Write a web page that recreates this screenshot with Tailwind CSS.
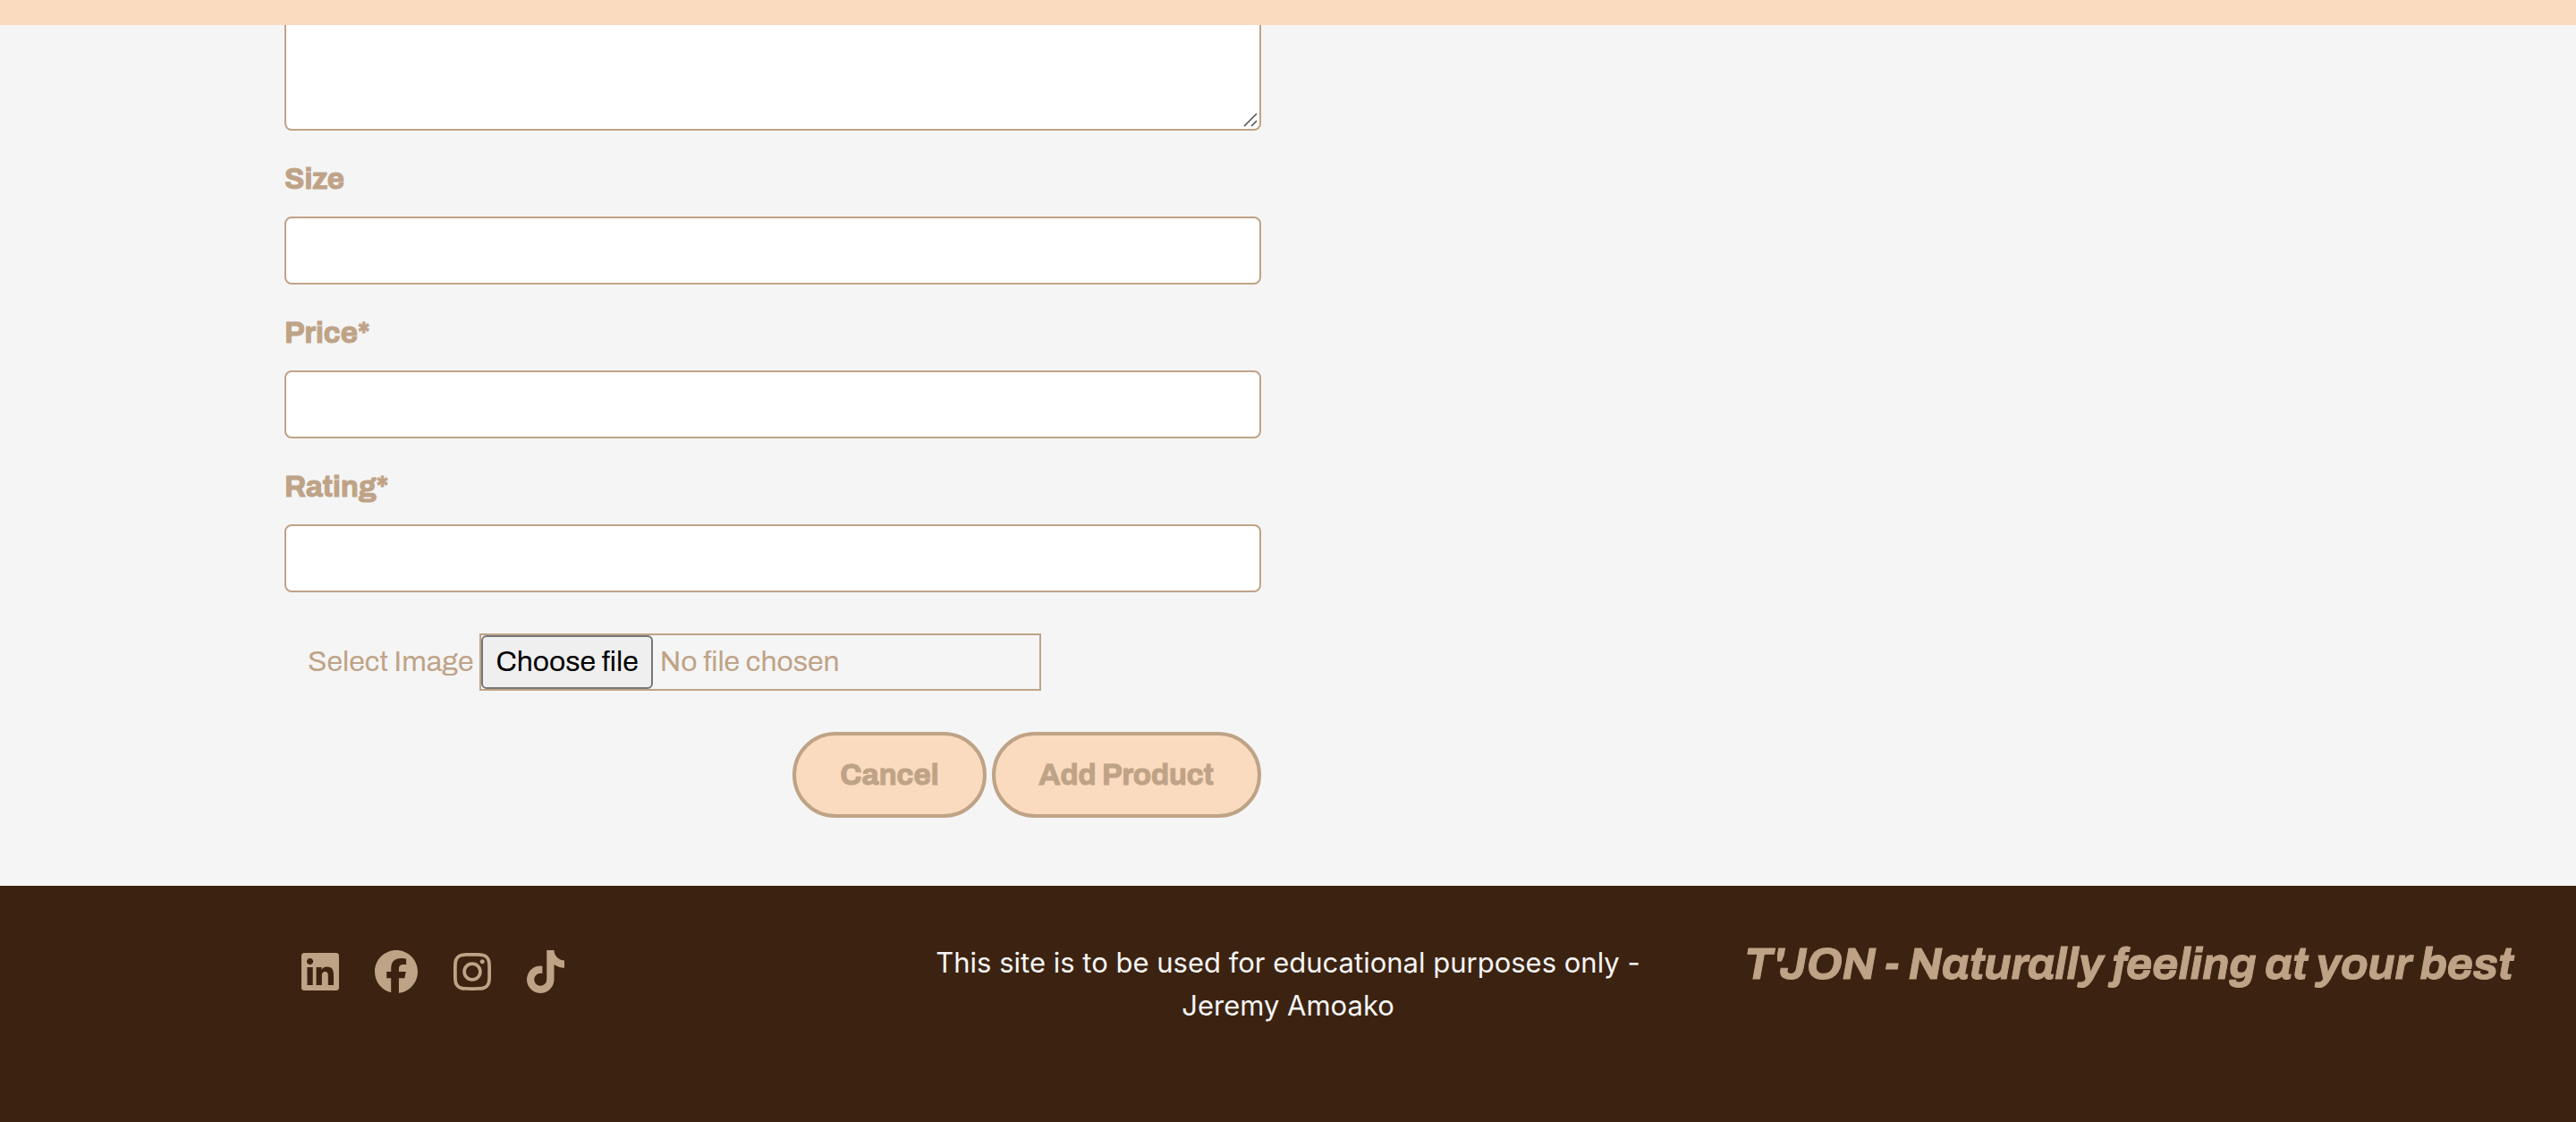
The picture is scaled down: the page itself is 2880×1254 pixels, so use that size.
<!DOCTYPE html>
<html lang="en">
<head>
<meta charset="utf-8">
<meta name="viewport" content="width=device-width, initial-scale=1">
<title>T'JON - Add Product</title>
<script src="https://cdn.jsdelivr.net/npm/@tailwindcss/browser@4"></script>
</head>
<body class="flex min-h-screen flex-col bg-[#f5f5f5] font-['Archivo','Liberation_Sans',sans-serif] text-[32px] leading-[48px] text-[#bfa387]">
<header class="h-7 bg-[#fadbbf]"></header>

<main class="pr-3">
  <div class="mx-auto grid max-w-[2280px] grid-cols-2">
    <form class="flex flex-col px-6 pb-[76px]">
      <div class="relative">
        <textarea aria-label="Description" class="block h-[118px] w-full resize-none rounded-b-lg border-2 border-t-0 border-[#bfa387] bg-white px-6 py-3"></textarea>
        <svg class="pointer-events-none absolute right-1 bottom-1 size-4" viewBox="0 0 16 16" fill="none" stroke="#555" stroke-width="1.6" aria-hidden="true"><path d="M1 15 15 1M9 15l6-6"/></svg>
      </div>

      <label for="size" class="mt-[30px] text-[33px] font-bold [-webkit-text-stroke:1px]">Size</label>
      <input id="size" type="text" class="mt-[18px] h-[76px] w-full rounded-lg border-2 border-[#bfa387] bg-white px-6">

      <label for="price" class="mt-[30px] text-[33px] font-bold [-webkit-text-stroke:1px]">Price*</label>
      <input id="price" type="text" class="mt-[18px] h-[76px] w-full rounded-lg border-2 border-[#bfa387] bg-white px-6">

      <label for="rating" class="mt-[30px] text-[33px] font-bold [-webkit-text-stroke:1px]">Rating*</label>
      <input id="rating" type="text" class="mt-[18px] h-[76px] w-full rounded-lg border-2 border-[#bfa387] bg-white px-6">

      <div class="mt-[46px] flex items-center gap-[7px] pl-[26px]">
        <label for="image">Select Image</label>
        <div class="relative flex h-16 w-[628px] items-center gap-2 border-2 border-[#bfa387]">
          <span class="flex h-full items-center rounded-md border-2 border-[#767676] bg-[#efefef] px-3.5 text-black">Choose file</span>
          <span>No file chosen</span>
          <input id="image" type="file" class="absolute inset-0 size-full opacity-0">
        </div>
      </div>

      <div class="mt-[46px] flex justify-end gap-1.5 text-[33px] font-bold [-webkit-text-stroke:1px]">
        <button type="button" class="h-24 rounded-full border-4 border-[#bfa387] bg-[#fadbbf] px-[49px]">Cancel</button>
        <button type="submit" class="h-24 rounded-full border-4 border-[#bfa387] bg-[#fadbbf] px-[49px]">Add Product</button>
      </div>
    </form>
  </div>
</main>

<footer class="grid grow grid-cols-3 items-start bg-[#3c2311] pt-[62px]">
  <nav aria-label="Social media" class="flex gap-10 pt-2.5 pl-[337px]">
    <a href="#" aria-label="LinkedIn"><svg class="h-12 w-[42px]" viewBox="0 0 448 512" fill="currentColor"><path d="M416 32H31.900C14.300 32 0 46.500 0 64.300v383.400C0 465.500 14.300 480 31.900 480H416c17.600 0 32-14.500 32-32.300V64.300c0-17.800-14.400-32.300-32-32.300zM135.400 416H69V202.200h66.500V416zm-33.200-243c-21.300 0-38.500-17.300-38.500-38.500S80.900 96 102.200 96c21.200 0 38.500 17.300 38.500 38.500 0 21.300-17.200 38.500-38.500 38.500zm282.100 243h-66.400V312c0-24.800-.5-56.700-34.500-56.700-34.600 0-39.900 27-39.900 54.900V416h-66.400V202.200h63.700v29.200h.9c8.900-16.800 30.600-34.500 62.900-34.500 67.200 0 79.700 44.300 79.700 101.900V416z"/></svg></a>
    <a href="#" aria-label="Facebook"><svg class="size-12" viewBox="0 0 512 512" fill="currentColor"><path d="M512 256C512 114.600 397.400 0 256 0S0 114.600 0 256C0 376 82.700 476.800 194.200 504.500V334.200H141.400V256h52.800V222.300c0-87.100 39.400-127.500 125-127.500c16.200 0 44.200 3.200 55.700 6.400V172c-6-.6-16.500-1-29.600-1c-42 0-58.200 15.900-58.200 57.200V256h83.600l-14.400 78.200H287V510.100C413.800 494.800 512 386.900 512 256h0z"/></svg></a>
    <a href="#" aria-label="Instagram"><svg class="h-12 w-[42px]" viewBox="0 0 448 512" fill="currentColor"><path d="M224.100 141c-63.600 0-114.900 51.300-114.900 114.900s51.300 114.900 114.900 114.900S339 319.500 339 255.900 287.700 141 224.100 141zm0 189.600c-41.100 0-74.700-33.500-74.700-74.700s33.500-74.700 74.700-74.700 74.700 33.500 74.700 74.700-33.600 74.700-74.700 74.700zm146.400-194.300c0 14.900-12 26.800-26.800 26.800-14.900 0-26.800-12-26.800-26.800s12-26.800 26.800-26.800 26.800 12 26.800 26.800zm76.100 27.200c-1.700-35.900-9.900-67.700-36.200-93.900-26.200-26.200-58-34.400-93.900-36.200-37-2.100-147.900-2.100-184.900 0-35.800 1.700-67.600 9.900-93.900 36.100s-34.400 58-36.200 93.900c-2.100 37-2.100 147.900 0 184.900 1.700 35.900 9.900 67.700 36.200 93.900s58 34.400 93.900 36.200c37 2.100 147.900 2.100 184.900 0 35.900-1.700 67.700-9.900 93.900-36.200 26.200-26.200 34.400-58 36.200-93.900 2.100-37 2.100-147.800 0-184.800zM398.800 388c-7.800 19.600-22.900 34.700-42.600 42.600-29.500 11.700-99.500 9-132.100 9s-102.700 2.600-132.100-9c-19.600-7.800-34.700-22.900-42.600-42.600-11.700-29.500-9-99.500-9-132.100s-2.600-102.700 9-132.100c7.800-19.600 22.900-34.700 42.600-42.600 29.500-11.700 99.500-9 132.100-9s102.700-2.600 132.100 9c19.600 7.800 34.700 22.900 42.600 42.600 11.700 29.500 9 99.500 9 132.100s2.700 102.700-9 132.100z"/></svg></a>
    <a href="#" aria-label="TikTok"><svg class="h-12 w-[42px]" viewBox="0 0 448 512" fill="currentColor"><path d="M448 209.900a210.100 210.100 0 0 1-122.800-39.300V349.400A162.600 162.600 0 1 1 185 188.300V278.200a74.600 74.600 0 1 0 52.200 71.200V0l88 0a121.200 121.200 0 0 0 1.900 22.200h0A122.200 122.200 0 0 0 381 102.400a121.400 121.400 0 0 0 67 20.100z"/></svg></a>
  </nav>
  <p class="px-6 text-center font-['Inter',sans-serif] text-[31px] text-[#f5f5f5]">This site is to be used for educational purposes only - <br>Jeremy Amoako</p>
  <p class="pr-10 text-center text-[50px] leading-[52px] font-bold whitespace-nowrap italic [-webkit-text-stroke:1px]">T'JON - Naturally feeling at your best</p>
</footer>
</body>
</html>
